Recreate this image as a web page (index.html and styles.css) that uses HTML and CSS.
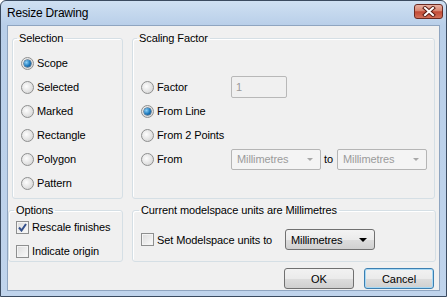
FILE: index.html
```html
<!DOCTYPE html>
<html lang="en">
<head>
    <meta charset="UTF-8">
    <title>Resize Drawing</title>
    <link rel="stylesheet" href="styles.css">
</head>
<body>
    <div class="window">
        <header class="titlebar">
            <span class="title">Resize Drawing</span>
            <span class="close">
                <svg width="14" height="11" viewBox="0 0 14 11">
                    <path d="M3 2 L11 9 M11 2 L3 9" stroke="#5a1c14" stroke-width="4" stroke-linecap="square"/>
                    <path d="M3 2 L11 9 M11 2 L3 9" stroke="#fff" stroke-width="2" stroke-linecap="square"/>
                </svg>
            </span>
        </header>
        <main class="client">
            <div class="top-row">
                <fieldset class="group selection">
                    <legend>Selection</legend>
                    <div class="opt"><span class="radio checked"></span>Scope</div>
                    <div class="opt"><span class="radio"></span>Selected</div>
                    <div class="opt"><span class="radio"></span>Marked</div>
                    <div class="opt"><span class="radio"></span>Rectangle</div>
                    <div class="opt"><span class="radio"></span>Polygon</div>
                    <div class="opt"><span class="radio"></span>Pattern</div>
                </fieldset>
                <fieldset class="group scaling">
                    <legend>Scaling Factor</legend>
                    <div class="scale-row">
                        <div class="opt"><span class="radio"></span>Factor</div>
                        <span class="textbox">1</span>
                    </div>
                    <div class="scale-row">
                        <div class="opt"><span class="radio checked"></span>From Line</div>
                    </div>
                    <div class="scale-row">
                        <div class="opt"><span class="radio"></span>From 2 Points</div>
                    </div>
                    <div class="scale-row">
                        <div class="opt"><span class="radio"></span>From</div>
                        <div class="units-pair">
                            <span class="combo disabled">Millimetres<span class="arrow"></span></span>
                            <span class="to">to</span>
                            <span class="combo disabled">Millimetres<span class="arrow"></span></span>
                        </div>
                    </div>
                </fieldset>
            </div>
            <div class="bottom-row">
                <fieldset class="group options">
                    <legend>Options</legend>
                    <div class="check-row">
                        <span class="checkbox">
                            <svg width="9" height="9" viewBox="0 0 9 9"><path d="M1 4.5 L3.5 7.5 L8 1" fill="none" stroke="#34508c" stroke-width="2"/></svg>
                        </span>Rescale finishes
                    </div>
                    <div class="check-row"><span class="checkbox"></span>Indicate origin</div>
                </fieldset>
                <fieldset class="group units">
                    <legend>Current modelspace units are Millimetres</legend>
                    <div class="units-row">
                        <div class="check-row"><span class="checkbox"></span>Set Modelspace units to</div>
                        <span class="combo">Millimetres<span class="arrow"></span></span>
                    </div>
                </fieldset>
            </div>
            <div class="buttons">
                <button class="btn">OK</button>
                <button class="btn default">Cancel</button>
            </div>
        </main>
    </div>
</body>
</html>
```

FILE: styles.css
```css
* {
    box-sizing: border-box;
}

body {
    margin: 0;
    font-family: "Liberation Sans", Arial, sans-serif;
    font-size: 11px;
    letter-spacing: -0.1px;
    color: #000;
}

.window {
    width: 447px;
    height: 297px;
    display: flex;
    flex-direction: column;
    border: 1px solid #3b4b60;
    border-radius: 6px 6px 0 0;
    background: linear-gradient(#cfe0f2, #b9cfe9 24px, #c0d4ec);
    padding: 0 6px 5px;
}

.titlebar {
    height: 24px;
    display: flex;
    justify-content: space-between;
    margin-right: -3px;
}

.title {
    font-size: 12px;
    letter-spacing: -0.2px;
    line-height: 24px;
    color: #000;
}

.close {
    width: 29px;
    height: 15px;
    margin-top: 3px;
    display: flex;
    align-items: center;
    justify-content: center;
    border: 1px solid #6b2a22;
    border-radius: 3px;
    background: linear-gradient(#e8b0a2, #d88570 45%, #c24a36 52%, #d2705a);
}

.client {
    flex: 1;
    display: flex;
    flex-direction: column;
    background: #f0f0f0;
    border: 1px solid #8fa5c0;
    padding: 5px 5px 0 0;
}

.top-row {
    display: grid;
    grid-template-columns: 111px 303px;
    column-gap: 9px;
    height: 168px;
    margin-left: 4px;
}

.bottom-row {
    display: grid;
    grid-template-columns: 115px 304px;
    column-gap: 9px;
    height: 59px;
    margin-top: 4px;
}

.group {
    margin: 0;
    min-width: 0;
    border: 1px solid #d5dfe5;
    border-radius: 3px;
    box-shadow: inset 1px 1px 0 #fff;
    padding: 0 8px;
}

.group legend {
    margin-left: -4px;
    padding: 0 2px;
    line-height: 14px;
    height: 14px;
}

.options legend,
.units legend {
    margin-left: -2px;
}

.selection {
    padding-top: 6px;
}

.scaling {
    padding-top: 30px;
}

.opt {
    height: 24px;
    display: flex;
    align-items: center;
    gap: 3px;
}

.radio {
    width: 13px;
    height: 13px;
    border-radius: 50%;
    border: 1px solid #8e8f8f;
    background: radial-gradient(circle at 40% 40%, #fdfdfd, #dcdcdc 70%, #cacaca);
    display: flex;
    align-items: center;
    justify-content: center;
}

.radio.checked::after {
    content: "";
    width: 7px;
    height: 7px;
    border-radius: 50%;
    background: radial-gradient(circle at 35% 35%, #8fd2f8, #1c79bd 55%, #0a3e6e);
    box-shadow: 0 0 0 0.5px #0f3a60;
}

.scale-row {
    height: 24px;
    display: grid;
    grid-template-columns: 90px auto;
    align-items: center;
}

.textbox {
    width: 56px;
    height: 22px;
    border: 1px solid #b8b8b8;
    border-radius: 2px;
    padding: 3px 4px;
    color: #9a9a9a;
    line-height: 14px;
}

.units-pair {
    display: flex;
    align-items: center;
    gap: 3px;
}

.to {
    margin-right: 1px;
}

.combo {
    width: 90px;
    height: 21px;
    display: flex;
    align-items: center;
    justify-content: space-between;
    padding: 0 7px 0 5px;
    border: 1px solid #707070;
    border-radius: 3px;
    background: linear-gradient(#f3f3f3, #ebebeb 50%, #dddddd 51%, #d0d0d0);
}

.combo.disabled {
    width: 90px;
    height: 21px;
    border-color: #b5b5b5;
    border-radius: 2px;
    background: #f4f4f4;
    color: #9b9b9b;
}

.arrow {
    width: 0;
    height: 0;
    border-left: 4px solid transparent;
    border-right: 4px solid transparent;
    border-top: 4px solid #000;
}

.combo.disabled .arrow {
    border-left-width: 3.5px;
    border-right-width: 3.5px;
    border-top: 3px solid #a8a8a8;
}

.options {
    padding: 1px 7px 0;
}

.check-row {
    height: 18px;
    display: flex;
    align-items: center;
    gap: 3px;
}

.options .check-row + .check-row {
    margin-top: 6px;
}

.checkbox {
    width: 13px;
    height: 13px;
    border: 1px solid #8e8f8f;
    background: linear-gradient(135deg, #dcdcdc, #fbfbfb);
    box-shadow: inset 0 0 0 1px #f4f4f4;
    display: flex;
    align-items: center;
    justify-content: center;
}

.units {
    padding-top: 12px;
}

.units-row {
    height: 21px;
    display: grid;
    grid-template-columns: 144px auto;
    align-items: center;
}

.buttons {
    display: flex;
    justify-content: flex-end;
    gap: 10px;
    margin-top: 6px;
}

.btn {
    width: 70px;
    height: 21px;
    padding: 0;
    font: inherit;
    color: #000;
    border: 1px solid #707070;
    border-radius: 3px;
    background: linear-gradient(#f2f2f2, #ebebeb 50%, #dddddd 51%, #cfcfcf);
}

.btn.default {
    border-color: #3c7fb1;
    box-shadow: inset 0 0 0 1px #a7d9f5;
}
```
